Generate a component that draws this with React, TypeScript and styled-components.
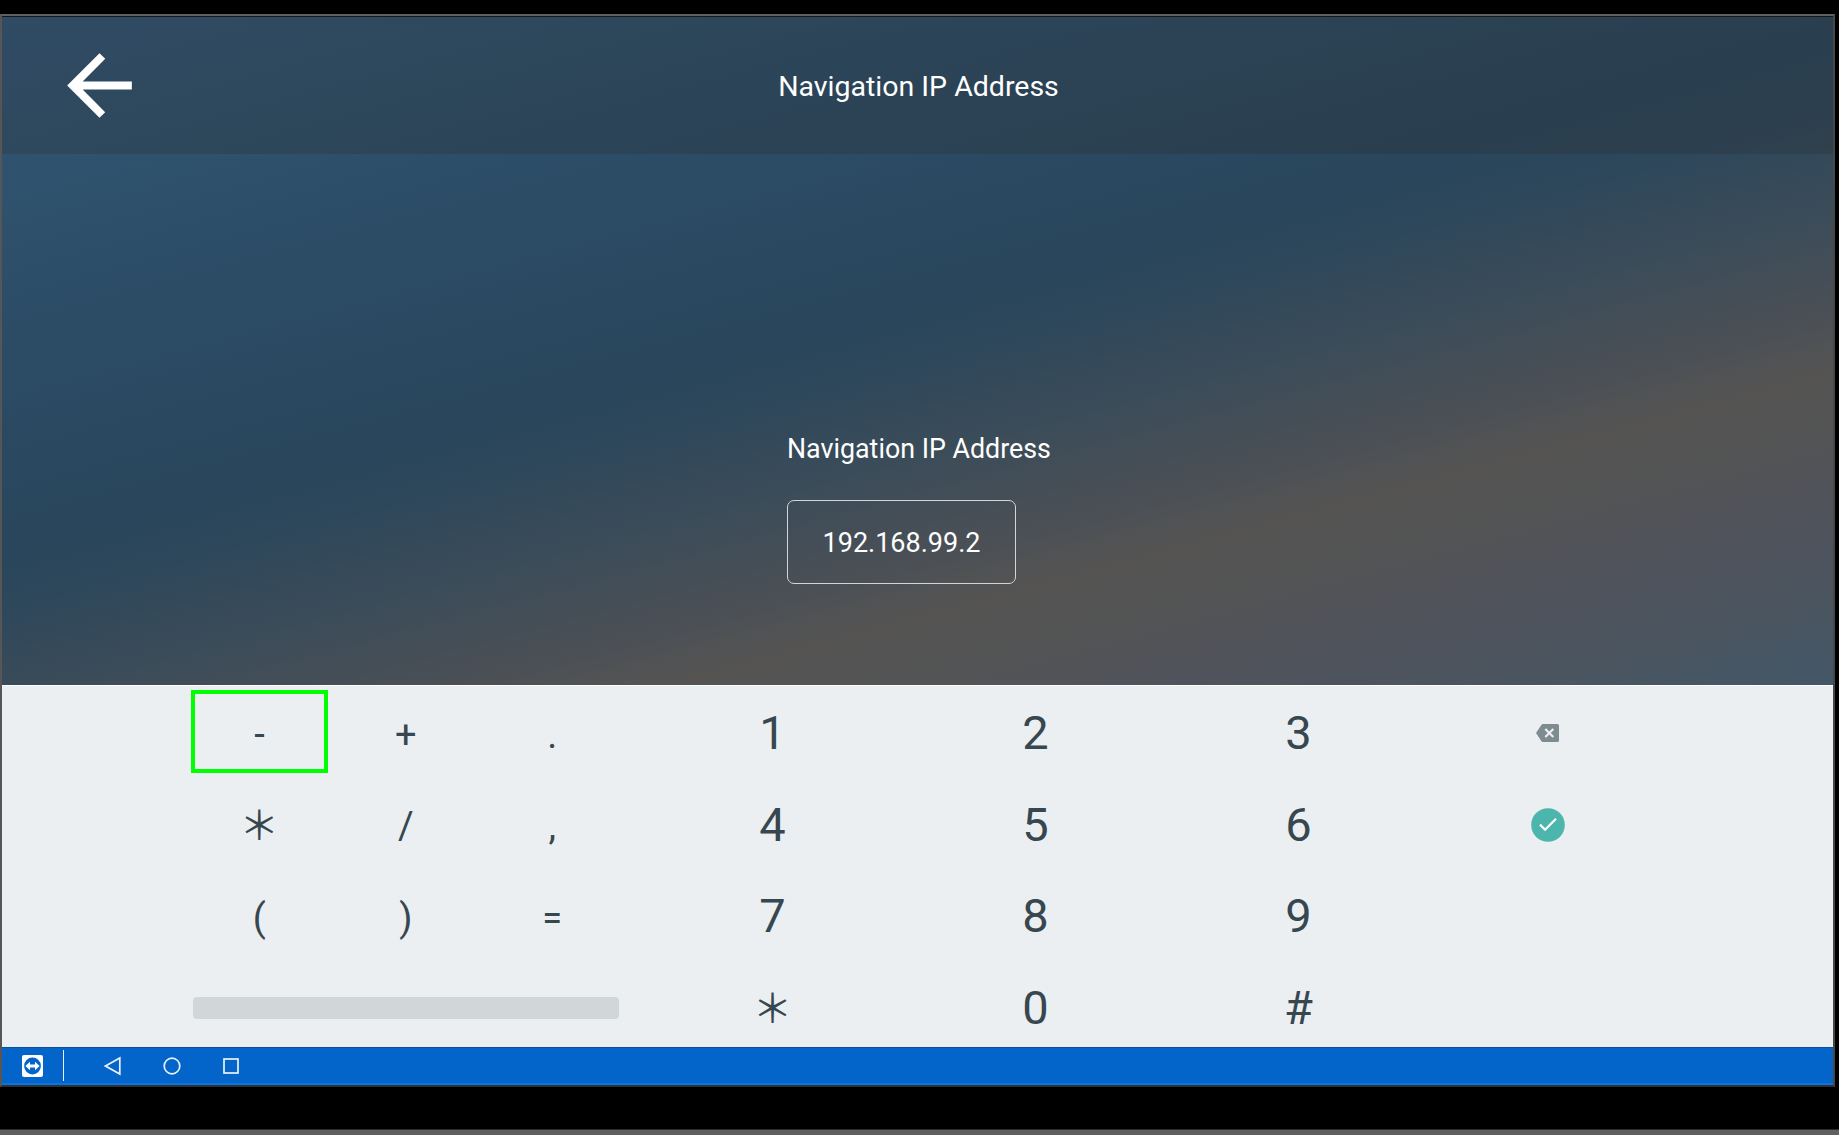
import React from "react";
import styled, { createGlobalStyle } from "styled-components";

const GlobalStyle = createGlobalStyle`
  * { box-sizing: border-box; }
  body { margin: 0; background: #000; font-family: Roboto, "Liberation Sans", sans-serif; }
`;

const Desktop = styled.div`
  width: 1839px;
  height: 1135px;
  display: flex;
  flex-direction: column;
  justify-content: space-between;
  padding-top: 14px;
  background: #000;
  overflow: hidden;
`;

const Frame = styled.div`
  width: 1835px;
  height: 1073px;
  display: flex;
  flex-direction: column;
  border-style: solid;
  border-width: 2px 2px 2px 2px;
  border-color: #606060 #484848 #303030 #565656;
`;

const BottomEdge = styled.div`
  height: 6px;
  background: #606060;
  border-top: 1px solid #2c2c2c;
`;

const Screen = styled.div`
  height: 669px;
  flex: none;
  display: flex;
  flex-direction: column;
  border-top: 1px solid #15181a;
  background: linear-gradient(
    165deg,
    #31587a 0%,
    #2f536f 12%,
    #2c4c66 28%,
    #29465c 45%,
    #2d475b 50.5%,
    #3b4c59 59%,
    #494f56 67%,
    #555453 73%,
    #535455 78.5%,
    #50535c 85%,
    #4a5560 93%,
    #435768 100%
  );
`;

const Header = styled.header`
  height: 137px;
  flex: none;
  display: grid;
  grid-template-columns: 200px 1fr 200px;
  align-items: center;
  background: rgba(43, 43, 43, 0.27);
`;

const BackButton = styled.button`
  display: flex;
  justify-self: start;
  margin-left: 49px;
  padding: 0;
  border: 0;
  background: none;
  color: #fff;
`;

const Title = styled.h1`
  margin: 2px 0 0 2px;
  text-align: center;
  font-size: 28.5px;
  line-height: 34px;
  font-weight: 400;
  color: #fff;
`;

const Form = styled.main`
  flex: 1;
  display: flex;
  flex-direction: column;
  align-items: flex-start;
  padding: 279px 0 0 785px;
`;

const Label = styled.label`
  font-size: 26.8px;
  line-height: 32px;
  color: #fff;
`;

const AddressField = styled.div`
  width: 229px;
  height: 84px;
  margin-top: 35px;
  padding-top: 2px;
  display: flex;
  align-items: center;
  justify-content: center;
  border: 1.5px solid #d2d6d8;
  border-radius: 7px;
  font-size: 27px;
  color: #fff;
`;

const Keyboard = styled.section`
  height: 362px;
  flex: none;
  display: flex;
  padding: 1px 0 0 183.5px;
  border-top: 1px solid #fff;
  background: #ebeff2;
  color: #37474f;
`;

const KeyGrid = styled.div<{ $cell: number; $cols: number }>`
  display: grid;
  grid-template-columns: repeat(${(p) => p.$cols}, ${(p) => p.$cell}px);
  grid-template-rows: repeat(4, 91.6px);
  flex: none;
`;

const Numbers = styled.div`
  margin-left: 16px;
`;

const Key = styled.button<{ $size: number; $drop?: number }>`
  display: flex;
  align-items: center;
  justify-content: center;
  padding: ${(p) => p.$drop ?? 0}px 0 0;
  border: 0;
  background: none;
  color: inherit;
  font-family: inherit;
  font-size: ${(p) => p.$size}px;
  line-height: 1;
`;

const SymbolKey = styled(Key)`
  padding-left: 1px;
`;

const SelectedKey = styled(Key)`
  width: 137px;
  height: 83px;
  margin: 3px 0 0 5.5px;
  border: 4px solid #00ff00;
`;

const Star = styled.span`
  font-family: "Noto Sans CJK JP", sans-serif;
  font-size: 40px;
  font-weight: 400;
  line-height: 1;
  margin-top: -4px;
`;

const SpaceKey = styled.button`
  grid-column: 1 / -1;
  align-self: center;
  height: 22px;
  margin: 0 6px 0 7px;
  padding: 0;
  border: 0;
  border-radius: 4px;
  background: #d1d6d9;
`;

const NavBar = styled.nav`
  height: 38px;
  flex: none;
  display: flex;
  align-items: center;
  padding-left: 20px;
  background: #0364c9;
  border-top: 1px solid #0a4f9c;
  border-bottom: 2px solid #0a74e6;
`;

const Divider = styled.div`
  width: 1px;
  height: 31px;
  margin: 0 40px 0 20px;
  background: #e6effa;
`;

const NavIcons = styled.div`
  display: flex;
  align-items: center;
  gap: 41px;
`;

const LineIcon = styled.svg`
  display: block;
  fill: none;
  stroke: #e9f2fc;
  stroke-width: 1.7;
`;

const symbols = ["-", "+", ".", "*", "/", ",", "(", ")", "="];
const digits = ["1", "2", "3", "4", "5", "6", "7", "8", "9", "*", "0", "#"];

const glyph = (k: string) => (k === "*" ? <Star>＊</Star> : k);

export default function App() {
  return (
    <>
      <GlobalStyle />
      <Desktop>
        <Frame>
          <Screen>
            <Header>
              <BackButton aria-label="Back">
                <svg width="97" height="97" viewBox="0 0 24 24" fill="currentColor">
                  <path d="M20 11H7.83l5.59-5.59L12 4l-8 8 8 8 1.41-1.41L7.83 13H20v-2z" />
                </svg>
              </BackButton>
              <Title>Navigation IP Address</Title>
            </Header>
            <Form>
              <Label>Navigation IP Address</Label>
              <AddressField>192.168.99.2</AddressField>
            </Form>
          </Screen>
          <Keyboard>
            <KeyGrid $cell={146.5} $cols={3}>
              {symbols.map((k, i) =>
                i === 0 ? (
                  <SelectedKey key={k} $size={38} $drop={4}>{k}</SelectedKey>
                ) : (
                  <SymbolKey key={k} $size={k === "=" ? 36 : 38} $drop={k === "*" ? 1 : 4}>
                    {glyph(k)}
                  </SymbolKey>
                )
              )}
              <SpaceKey aria-label="Space" />
            </KeyGrid>
            <Numbers>
              <KeyGrid $cell={263} $cols={3}>
                {digits.map((k) => (
                  <Key key={k} $size={47}>{glyph(k)}</Key>
                ))}
              </KeyGrid>
            </Numbers>
            <KeyGrid $cell={235} $cols={1}>
              <Key $size={38} aria-label="Delete">
                <svg width="23" height="18" viewBox="0 0 23 18">
                  <path d="M7 0H21.5Q23 0 23 1.5V16.5Q23 18 21.5 18H7Q6 18 5.3 17L0 9L5.3 1Q6 0 7 0Z" fill="#7e8b91" />
                  <path d="M9.3 5L17.3 13M17.3 5L9.3 13" stroke="#ebeff2" strokeWidth="2.2" />
                </svg>
              </Key>
              <Key $size={38} $drop={1} aria-label="Done">
                <svg width="34" height="34" viewBox="0 0 34 34">
                  <circle cx="17" cy="17" r="16.8" fill="#4db6ac" />
                  <path d="M9 16.6L14.1 21.7L25 10.8" fill="none" stroke="#fff" strokeWidth="2.2" />
                </svg>
              </Key>
            </KeyGrid>
          </Keyboard>
          <NavBar>
            <svg width="21" height="22" viewBox="0 0 21 22">
              <rect width="21" height="22" rx="2" fill="#fff" />
              <circle cx="10.5" cy="11" r="8.4" fill="#0364c9" />
              <path d="M3.4 11L8 6.8V9.6H13V6.8L17.6 11L13 15.2V12.4H8V15.2Z" fill="#fff" />
            </svg>
            <Divider />
            <NavIcons>
              <LineIcon width="18" height="20" viewBox="0 0 18 20">
                <path d="M1.5 10L15.8 2V18Z" />
              </LineIcon>
              <LineIcon width="18" height="18" viewBox="0 0 18 18">
                <circle cx="9" cy="9" r="7.8" />
              </LineIcon>
              <LineIcon width="18" height="18" viewBox="0 0 18 18">
                <rect x="2" y="2" width="14" height="14" />
              </LineIcon>
            </NavIcons>
          </NavBar>
        </Frame>
        <BottomEdge />
      </Desktop>
    </>
  );
}
